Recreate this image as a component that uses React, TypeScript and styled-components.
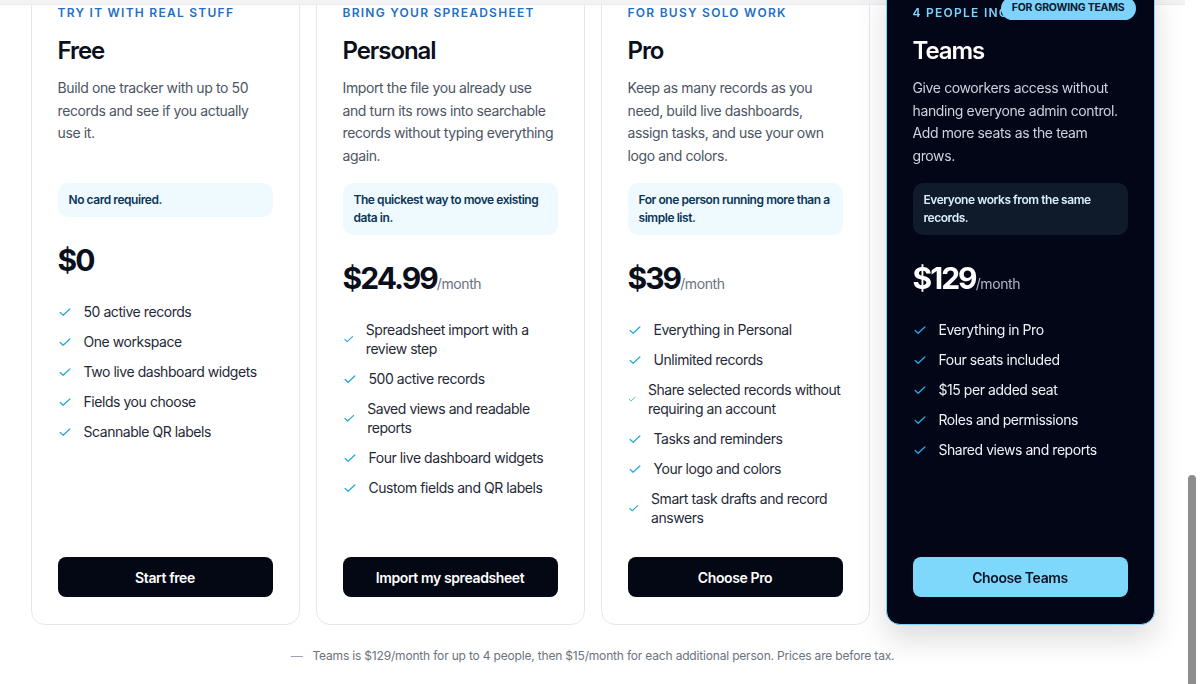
import styled, { createGlobalStyle, css } from "styled-components";

const GlobalStyle = createGlobalStyle`
  html, body {
    margin: 0;
    padding: 0;
    background: #ffffff;
    overflow: hidden;
  }
  body {
    font-family: Inter, "Noto Sans", "Liberation Sans", sans-serif;
    color: #0a0f1c;
    letter-spacing: -0.028em;
    -webkit-font-smoothing: antialiased;
  }
  * {
    box-sizing: border-box;
  }
`;

type Tone = { $dark?: boolean };

const TopBar = styled.div`
  position: fixed;
  top: 0;
  left: 0;
  right: 15px;
  height: 5px;
  background: rgba(241, 242, 244, 0.92);
  border-bottom: 1px solid #ececee;
  z-index: 1;
`;

const ScrollThumb = styled.div`
  position: fixed;
  right: 4px;
  top: 475px;
  width: 8px;
  height: 240px;
  border-radius: 4px;
  background: #8c8c8c;
`;

const Page = styled.main`
  padding-right: 15px;
  margin-top: -20px;
`;

const Grid = styled.section`
  display: grid;
  grid-template-columns: repeat(4, 269px);
  gap: 16px;
  justify-content: center;
`;

const Card = styled.article<Tone>`
  position: relative;
  display: flex;
  flex-direction: column;
  padding: 24px 26px 27px;
  border-radius: 14px;
  border: 1px solid #e6e7ea;
  background: #ffffff;

  ${({ $dark }) =>
    $dark &&
    css`
      z-index: 2;
      background: #020617;
      border-color: #7dd3fc;
      box-shadow: 0 14px 30px rgba(2, 6, 23, 0.14);
    `}
`;

const Badge = styled.span`
  position: absolute;
  top: 16px;
  right: 18px;
  padding: 4px 11px 5px;
  border-radius: 999px;
  background: #7dd3fc;
  color: #0b1b2e;
  font-size: 10.5px;
  line-height: 14px;
  font-weight: 700;
  letter-spacing: -0.02em;
  white-space: nowrap;
`;

const Eyebrow = styled.div<Tone>`
  font-size: 12px;
  line-height: 16px;
  font-weight: 600;
  letter-spacing: 0.105em;
  text-transform: uppercase;
  color: ${({ $dark }) => ($dark ? "#7dd3fc" : "#1f6fc5")};
  white-space: nowrap;
`;

const Title = styled.h2<Tone>`
  margin: 15px 0 0;
  font-size: 24px;
  line-height: 30px;
  font-weight: 600;
  letter-spacing: -0.045em;
  color: ${({ $dark }) => ($dark ? "#ffffff" : "#0a0f1c")};
`;

const Description = styled.p<Tone>`
  margin: 11px 0 0;
  min-height: 90px;
  font-size: 14px;
  line-height: 22.5px;
  letter-spacing: -0.0272em;
  color: ${({ $dark }) => ($dark ? "#cbd2dc" : "#4b5563")};
`;

const Note = styled.div<Tone>`
  margin-top: 16px;
  padding: 8px 11px;
  border-radius: 10px;
  font-size: 12px;
  line-height: 18px;
  font-weight: 600;
  background: ${({ $dark }) => ($dark ? "#0f1b2b" : "#eefaff")};
  color: ${({ $dark }) => ($dark ? "#d9eefc" : "#0c3557")};
`;

const Price = styled.div<Tone>`
  margin-top: 25px;
  height: 36px;
  font-size: 30px;
  line-height: 36px;
  font-weight: 700;
  letter-spacing: -0.065em;
  color: ${({ $dark }) => ($dark ? "#ffffff" : "#0a0f1c")};
`;

const Period = styled.span<Tone>`
  font-size: 14px;
  line-height: 1;
  font-weight: 400;
  letter-spacing: -0.028em;
  color: ${({ $dark }) => ($dark ? "#aeb6c2" : "#6b7280")};
`;

const Features = styled.ul`
  list-style: none;
  margin: 24px 0 30px;
  padding: 0;
  display: flex;
  flex-direction: column;
  gap: 11px;
`;

const Feature = styled.li<Tone>`
  display: flex;
  align-items: center;
  gap: 12px;
  font-size: 14px;
  line-height: 19px;
  color: ${({ $dark }) => ($dark ? "#eef2f7" : "#1f2937")};
`;

const CheckIcon = styled.svg`
  width: 14px;
  height: 14px;
  color: #2aa8e0;
`;

const Action = styled.button<Tone>`
  margin-top: auto;
  height: 40px;
  width: 100%;
  border: none;
  border-radius: 8px;
  font-family: inherit;
  font-size: 14px;
  font-weight: 600;
  letter-spacing: -0.028em;
  cursor: pointer;
  background: ${({ $dark }) => ($dark ? "#7dd8fc" : "#040814")};
  color: ${({ $dark }) => ($dark ? "#0b1324" : "#ffffff")};
`;

const Footnote = styled.p`
  margin: 22px 0 0;
  text-align: center;
  font-size: 12px;
  line-height: 18px;
  letter-spacing: -0.015em;
  color: #6b7280;
`;

const Dash = styled.span`
  color: #9ca3af;
  margin-right: 10px;
`;

type Plan = {
  eyebrow: string;
  name: string;
  description: string;
  note: string;
  price: string;
  period?: string;
  features: string[];
  cta: string;
  badge?: string;
  dark?: boolean;
};

const plans: Plan[] = [
  {
    eyebrow: "Try it with real stuff",
    name: "Free",
    description: "Build one tracker with up to 50 records and see if you actually use it.",
    note: "No card required.",
    price: "$0",
    features: [
      "50 active records",
      "One workspace",
      "Two live dashboard widgets",
      "Fields you choose",
      "Scannable QR labels",
    ],
    cta: "Start free",
  },
  {
    eyebrow: "Bring your spreadsheet",
    name: "Personal",
    description:
      "Import the file you already use and turn its rows into searchable records without typing everything again.",
    note: "The quickest way to move existing data in.",
    price: "$24.99",
    period: "/month",
    features: [
      "Spreadsheet import with a review step",
      "500 active records",
      "Saved views and readable reports",
      "Four live dashboard widgets",
      "Custom fields and QR labels",
    ],
    cta: "Import my spreadsheet",
  },
  {
    eyebrow: "For busy solo work",
    name: "Pro",
    description:
      "Keep as many records as you need, build live dashboards, assign tasks, and use your own logo and colors.",
    note: "For one person running more than a simple list.",
    price: "$39",
    period: "/month",
    features: [
      "Everything in Personal",
      "Unlimited records",
      "Share selected records without requiring an account",
      "Tasks and reminders",
      "Your logo and colors",
      "Smart task drafts and record answers",
    ],
    cta: "Choose Pro",
  },
  {
    eyebrow: "4 people included",
    name: "Teams",
    description:
      "Give coworkers access without handing everyone admin control. Add more seats as the team grows.",
    note: "Everyone works from the same records.",
    price: "$129",
    period: "/month",
    features: [
      "Everything in Pro",
      "Four seats included",
      "$15 per added seat",
      "Roles and permissions",
      "Shared views and reports",
    ],
    cta: "Choose Teams",
    badge: "For growing teams",
    dark: true,
  },
];

function Check() {
  return (
    <CheckIcon viewBox="0 0 16 16" fill="none" aria-hidden="true">
      <path
        d="M2.5 8.6l3.4 3.2L13.5 4.6"
        stroke="currentColor"
        strokeWidth="1.5"
        strokeLinecap="round"
        strokeLinejoin="round"
      />
    </CheckIcon>
  );
}

function PlanCard({ plan }: { plan: Plan }) {
  const dark = plan.dark;
  return (
    <Card $dark={dark}>
      <Eyebrow $dark={dark}>{plan.eyebrow}</Eyebrow>
      {plan.badge && <Badge>{plan.badge.toUpperCase()}</Badge>}
      <Title $dark={dark}>{plan.name}</Title>
      <Description $dark={dark}>{plan.description}</Description>
      <Note $dark={dark}>{plan.note}</Note>
      <Price $dark={dark}>
        {plan.price}
        {plan.period && <Period $dark={dark}>{plan.period}</Period>}
      </Price>
      <Features>
        {plan.features.map((f) => (
          <Feature key={f} $dark={dark}>
            <Check />
            <span>{f}</span>
          </Feature>
        ))}
      </Features>
      <Action $dark={dark}>{plan.cta}</Action>
    </Card>
  );
}

export default function App() {
  return (
    <>
      <GlobalStyle />
      <TopBar />
      <Page>
        <Grid>
          {plans.map((p) => (
            <PlanCard key={p.name} plan={p} />
          ))}
        </Grid>
        <Footnote>
          <Dash>—</Dash>
          Teams is $129/month for up to 4 people, then $15/month for each additional person. Prices
          are before tax.
        </Footnote>
      </Page>
      <ScrollThumb />
    </>
  );
}
